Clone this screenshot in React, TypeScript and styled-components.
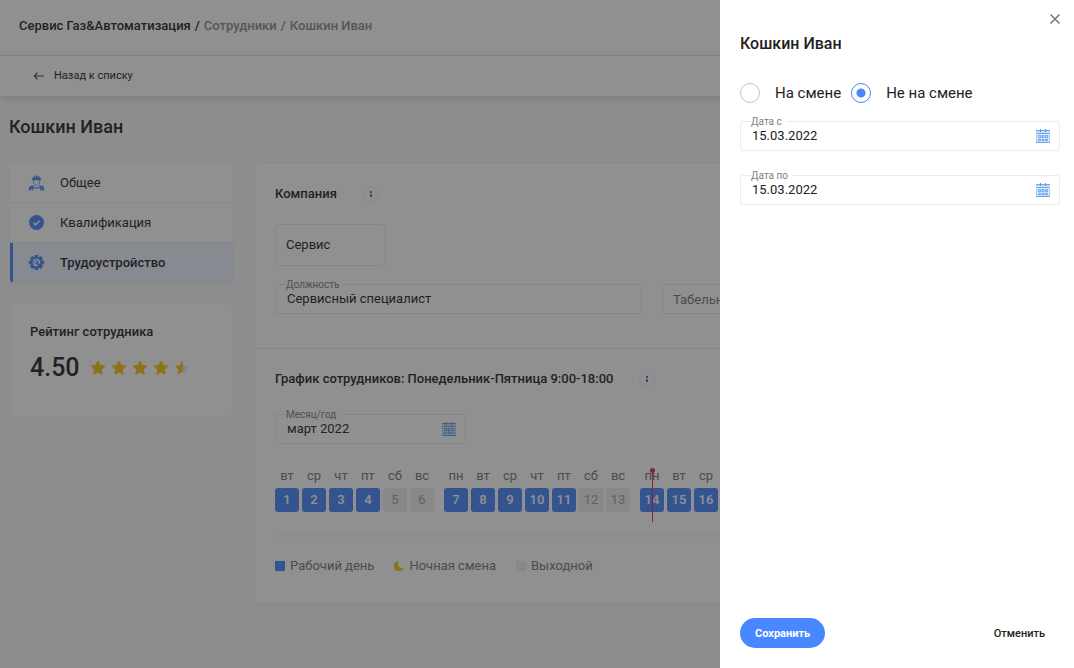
import React from 'react';
import styled, { createGlobalStyle, css } from 'styled-components';

const GlobalStyle = createGlobalStyle`
  *, *::before, *::after { box-sizing: border-box; }
  body {
    margin: 0;
    background: #f9f9f9;
    color: #222;
    font-family: Roboto, "Liberation Sans", sans-serif;
    font-size: 13px;
    line-height: 20px;
  }
  button, input { font: inherit; color: inherit; }
  h1, h2, h3 { margin: 0; font-weight: 500; }
  a { color: inherit; text-decoration: none; }
`;

const Page = styled.div`
  min-height: 100vh;
  overflow: hidden;
`;

const TopBar = styled.header`
  display: flex;
  align-items: center;
  height: 56px;
  padding: 0 19px 4px;
  background: #fff;
  border-bottom: 1px solid #e6e6e6;
`;

const Crumbs = styled.nav`
  display: flex;
  gap: 4px;
  font-weight: 500;
`;

const Crumb = styled.a<{ $muted?: boolean }>`
  color: ${(p) => (p.$muted ? '#8a8a8a' : '#222')};
`;

const SubBar = styled.div`
  display: flex;
  align-items: center;
  height: 40px;
  padding: 0 33px;
  background: #fff;
  box-shadow: 0 2px 8px rgba(0, 0, 0, 0.16);
`;

const BackLink = styled.a`
  display: flex;
  align-items: center;
  gap: 9px;
  font-size: 11px;
`;

const Title = styled.h1`
  padding: 19px 9px 24px;
  font-size: 18px;
  line-height: 24px;
`;

const Content = styled.div`
  display: flex;
  align-items: flex-start;
  gap: 20px;
  padding: 0 24px 24px 10px;
`;

const Side = styled.div`
  display: flex;
  flex-direction: column;
  flex: none;
  gap: 20px;
  width: 224px;
`;

const Menu = styled.nav`
  overflow: hidden;
  border-right: 1px solid #f0f0f0;
  border-radius: 4px;
  background: #fff;
`;

const MenuItem = styled.a<{ $active?: boolean }>`
  display: flex;
  align-items: center;
  gap: 15px;
  height: 40px;
  padding-left: ${(p) => (p.$active ? '15px' : '18px')};
  border-bottom: 1px solid #efefef;
  ${(p) =>
    p.$active &&
    css`
      background: #edf3ff;
      border-left: 3px solid #4787ff;
      font-weight: 500;
    `}
`;

const RatingCard = styled.section`
  height: 114px;
  padding: 18px 19px;
  border: 1px solid #f0f0f0;
  border-radius: 4px;
  background: #fff;
`;

const CardHeading = styled.h3`
  font-size: 13px;
`;

const RatingRow = styled.div`
  display: flex;
  align-items: center;
  gap: 10px;
  padding-top: 10px;
`;

const Score = styled.span`
  font-size: 25px;
  line-height: 32px;
  font-weight: 500;
`;

const Stars = styled.div`
  display: flex;
  gap: 5px;
`;

const Card = styled.main`
  flex: 1;
  min-width: 0;
  border: 1px solid #efefef;
  border-radius: 4px;
  background: #fff;
`;

const Section = styled.section`
  padding: 20px 20px 34px;
  & + & { border-top: 1px solid #ebebeb; }
`;

const SectionHead = styled.div<{ $gap: number }>`
  display: flex;
  align-items: center;
  gap: 26px;
  margin-bottom: ${(p) => p.$gap}px;
`;

const InfoButton = styled.button`
  display: flex;
  align-items: center;
  justify-content: center;
  width: 16px;
  height: 16px;
  padding: 0;
  border: 1px solid #efefef;
  border-radius: 50%;
  background: #fff;
`;

const CompanyChip = styled.div`
  width: 111px;
  padding: 10px;
  margin-bottom: 18px;
  border: 1px solid #ebebeb;
  border-radius: 4px;
`;

const FieldGrid = styled.div`
  display: grid;
  grid-template-columns: 1fr 1fr;
  gap: 20px;
`;

const FieldBox = styled.div<{ $width?: string }>`
  position: relative;
  display: flex;
  align-items: center;
  width: ${(p) => p.$width ?? '100%'};
  height: 30px;
  padding-right: 9px;
  border: 1px solid #ebebeb;
  border-radius: 3px;
  background: #fff;
`;

const FieldLabel = styled.label`
  position: absolute;
  top: -6px;
  left: 10px;
  padding-right: 4px;
  background: #fff;
  color: #808080;
  font-size: 10px;
  line-height: 12px;
`;

const TextInput = styled.input`
  flex: 1;
  min-width: 0;
  height: 28px;
  padding: 0 0 2px 11px;
  border: 0;
  background: none;
  outline: none;
  &:placeholder-shown { padding: 0 0 0 10px; }
  &::placeholder { color: #757575; opacity: 1; }
`;

const IconButton = styled.button`
  display: flex;
  padding: 0;
  border: 0;
  background: none;
`;

const Calendar = styled.div`
  display: flex;
  gap: 10px;
  margin-top: 22px;
  padding-bottom: 20px;
  border-bottom: 6px solid #fafafa;
`;

const Week = styled.div`
  display: flex;
  gap: 3px;
`;

const Day = styled.div`
  position: relative;
  display: flex;
  flex-direction: column;
  gap: 2px;
  width: 24px;
  text-align: center;
  color: #757575;
`;

const DayBox = styled.span<{ $off: boolean }>`
  height: 24px;
  border-radius: 3px;
  line-height: 24px;
  font-weight: ${(p) => (p.$off ? 400 : 500)};
  background: ${(p) => (p.$off ? '#efefef' : '#4787ff')};
  color: ${(p) => (p.$off ? '#a0a0a0' : '#fff')};
`;

const NowMarker = styled.span`
  position: absolute;
  top: 4px;
  left: 12px;
  width: 1px;
  height: 52px;
  background: #e4204a;
  &::before {
    content: '';
    position: absolute;
    top: -2px;
    left: -2px;
    width: 5px;
    height: 5px;
    border-radius: 50%;
    background: #e4204a;
  }
`;

const Legend = styled.div`
  display: flex;
  gap: 20px;
  padding-top: 18px;
  margin-bottom: -7px;
  color: #757575;
`;

const LegendItem = styled.span`
  display: flex;
  align-items: center;
  gap: 5px;
`;

const Swatch = styled.i<{ $color: string }>`
  width: 10px;
  height: 10px;
  background: ${(p) => p.$color};
`;

const Overlay = styled.div`
  position: fixed;
  inset: 0;
  display: flex;
  justify-content: flex-end;
  background: rgba(34, 34, 34, 0.5);
`;

const Drawer = styled.aside`
  display: flex;
  flex-direction: column;
  width: 354px;
  padding: 14px 14px 20px 20px;
  background: #fff;
`;

const CloseButton = styled(IconButton)`
  align-self: flex-end;
`;

const DrawerTitle = styled.h2`
  margin-top: 10px;
  font-size: 16px;
`;

const RadioRow = styled.div`
  display: flex;
  gap: 10px;
  margin: 29px 0 18px;
  font-size: 15px;
`;

const RadioLabel = styled.label`
  display: flex;
  align-items: center;
  gap: 15px;
`;

const Radio = styled.input`
  appearance: none;
  width: 20px;
  height: 20px;
  margin: 0;
  border: 1px solid #c4c4c4;
  border-radius: 50%;
  &:checked {
    border-color: #4787ff;
    background: radial-gradient(circle, #4787ff 0 4px, #fff 5px);
  }
`;

const DrawerFields = styled.div`
  display: flex;
  flex-direction: column;
  gap: 24px;
`;

const DrawerFooter = styled.div`
  display: flex;
  justify-content: space-between;
  margin-top: auto;
`;

const FooterButton = styled.button<{ $primary?: boolean }>`
  height: 30px;
  padding: 2px 15px 0;
  border: 0;
  border-radius: 15px;
  font-size: 11px;
  font-weight: ${(p) => (p.$primary ? 700 : 500)};
  background: ${(p) => (p.$primary ? '#4787ff' : 'none')};
  color: ${(p) => (p.$primary ? '#fff' : '#222')};
`;

const ArrowIcon = () => (
  <svg width="12" height="10" viewBox="0 0 12 10" fill="none" stroke="#444" strokeWidth="1.2" aria-hidden="true">
    <path d="M11 5H1.600M4.500 1.700 1.400 5l3.100 3.300" />
  </svg>
);

const WorkerIcon = () => (
  <svg width="17" height="16" viewBox="0 0 17 16" fill="#4787ff" aria-hidden="true">
    <path d="M4.600 3.600C4.800 2.200 5.800 1.300 7.200 1V2.600H7.900V.3H9.100V2.600H9.800V1c1.400.3 2.400 1.200 2.600 2.600h.8v1.600H3.800V3.600z" />
    <path d="M5.400 5.200v1.600c0 1.900 1.400 3.500 3.100 3.500s3.100-1.600 3.100-3.500V5.200" fill="none" stroke="#4787ff" strokeWidth=".8" />
    <path d="M5.800 10.200v1.600H5v3.700H3.700v-2H3v2H.8V13.600c0-1.600 1.100-2.600 2.600-2.900zM11.200 10.200v1.600h.8v3.700h1.300v-2h.7v2h2.200V13.600c0-1.600-1.100-2.600-2.600-2.900z" />
    <path d="M5 12.200h7v1.400H5z" />
  </svg>
);

const CheckIcon = () => (
  <svg width="17" height="16" viewBox="0 0 17 16" fill="none" aria-hidden="true">
    <circle cx="8.500" cy="7.500" r="7.500" fill="#4787ff" />
    <path d="m5.300 7.700 2.200 2.100 4.100-4.100" stroke="#fff" strokeWidth="1.500" />
  </svg>
);

const TEETH = [0, 45, 90, 135, 180, 225, 270, 315];

const GearIcon = () => (
  <svg width="17" height="16" viewBox="0 0 17 16" fill="none" aria-hidden="true">
    {TEETH.map((angle) => (
      <rect key={angle} x="6.700" y="0" width="3.600" height="3.500" rx=".6" fill="#4787ff" transform={`rotate(${angle} 8.500 7.500)`} />
    ))}
    <circle cx="8.500" cy="7.500" r="5" stroke="#4787ff" strokeWidth="2.200" />
    <path d="m8.600 7.600 3.600 3.600" stroke="#4787ff" strokeWidth="2" />
    <path d="M6.200 6.200c-.5 1.800.8 2.900 2.300 2.400 1.400-.4 1.900-1.600 1.300-2.900L8.600 6.900 7.600 6l1-1.300" stroke="#4787ff" strokeWidth="1" />
  </svg>
);

const STAR = 'M8 1l2.100 4.400 4.800.7-3.500 3.400.8 4.800L8 12l-4.200 2.300.8-4.800L1.100 6.100l4.800-.7z';

const StarIcon = ({ half = false }: { half?: boolean }) => (
  <svg width="16" height="16" viewBox="0 0 16 16" aria-hidden="true">
    {half && <path d={STAR} fill="#e6e6e6" />}
    <path
      d={half ? 'M8.800.8V12.400L8 12l-4.500 2.600.9-5L.8 6.100l5-.7L8 .8z' : STAR}
      fill="#f5c60c"
      stroke={half ? 'none' : '#f5c60c'}
      strokeWidth="1"
      strokeLinejoin="round"
    />
  </svg>
);

const InfoIcon = () => (
  <svg width="2" height="6" viewBox="0 0 2 6" fill="#2f7fd6" aria-hidden="true">
    <path d="M0 0h2v2H0zM0 3h2v3H0z" />
  </svg>
);

const CalendarIcon = () => (
  <svg width="14" height="15" viewBox="0 0 14 15" fill="none" aria-hidden="true">
    <path d="M.5 1.500h13v12H.5z" fill="#d9ecff" stroke="#a3cbf5" />
    <path d="M0 1h14v4H0z" fill="#c3dffb" />
    <path d="M0 1.500h14M1 4.500h12M0 13.500h14" stroke="#6ba6e6" />
    <path d="M4.500 0v3M9.500 0v3" stroke="#5596df" />
    <path d="M2.500 6.500h2v2h-2zM6 6.500h2v2H6zM9.500 6.500h2v2h-2zM2.500 10.200h2v1.600h-2zM6 10.200h2v1.600H6zM9.500 10.200h2v1.600h-2z" stroke="#5596df" strokeWidth=".8" />
  </svg>
);

const MoonIcon = () => (
  <svg width="10" height="12" viewBox="0 0 10 12" fill="#f5c60c" aria-hidden="true">
    <path d="M5 .8C1.500 1.400 0 3.800 0 6.200 0 9 2.200 11 5 11c2.200 0 4.200-1.100 5-3C6 9.600 2.200 5.500 5 .8z" />
  </svg>
);

const CloseIcon = () => (
  <svg width="10" height="10" viewBox="0 0 10 10" fill="none" stroke="#777" strokeWidth="1.500" aria-hidden="true">
    <path d="m.5.5 9 9M9.500.5l-9 9" />
  </svg>
);

type DateFieldProps = { id: string; label: string; value: string; width?: string };

const DateField = ({ id, label, value, width }: DateFieldProps) => (
  <FieldBox $width={width}>
    <FieldLabel htmlFor={id}>{label}</FieldLabel>
    <TextInput id={id} defaultValue={value} />
    <IconButton type="button" aria-label="Открыть календарь">
      <CalendarIcon />
    </IconButton>
  </FieldBox>
);

const DAY_NAMES = ['пн', 'вт', 'ср', 'чт', 'пт', 'сб', 'вс'];
const WEEKS = [
  [1, 2, 3, 4, 5, 6],
  [7, 8, 9, 10, 11, 12, 13],
  [14, 15, 16],
];
const TODAY = 14;

export default function App() {
  return (
    <>
      <GlobalStyle />
      <Page>
        <TopBar>
          <Crumbs aria-label="Навигация">
            <Crumb href="#">Сервис Газ&amp;Автоматизация</Crumb>
            <span>/</span>
            <Crumb href="#" $muted>Сотрудники</Crumb>
            <Crumb as="span" $muted>/</Crumb>
            <Crumb as="span" $muted>Кошкин Иван</Crumb>
          </Crumbs>
        </TopBar>
        <SubBar>
          <BackLink href="#">
            <ArrowIcon />
            Назад к списку
          </BackLink>
        </SubBar>
        <Title>Кошкин Иван</Title>
        <Content>
          <Side>
            <Menu>
              <MenuItem href="#"><WorkerIcon />Общее</MenuItem>
              <MenuItem href="#"><CheckIcon />Квалификация</MenuItem>
              <MenuItem href="#" $active><GearIcon />Трудоустройство</MenuItem>
            </Menu>
            <RatingCard>
              <CardHeading>Рейтинг сотрудника</CardHeading>
              <RatingRow>
                <Score>4.50</Score>
                <Stars>
                  <StarIcon />
                  <StarIcon />
                  <StarIcon />
                  <StarIcon />
                  <StarIcon half />
                </Stars>
              </RatingRow>
            </RatingCard>
          </Side>
          <Card>
            <Section>
              <SectionHead $gap={20}>
                <CardHeading>Компания</CardHeading>
                <InfoButton type="button" aria-label="Справка"><InfoIcon /></InfoButton>
              </SectionHead>
              <CompanyChip>Сервис</CompanyChip>
              <FieldGrid>
                <FieldBox>
                  <FieldLabel htmlFor="position">Должность</FieldLabel>
                  <TextInput id="position" defaultValue="Сервисный специалист" />
                </FieldBox>
                <FieldBox>
                  <TextInput aria-label="Табельный номер" placeholder="Табельный номер" />
                </FieldBox>
              </FieldGrid>
            </Section>
            <Section>
              <SectionHead $gap={25}>
                <CardHeading>График сотрудников: Понедельник-Пятница 9:00-18:00</CardHeading>
                <InfoButton type="button" aria-label="Справка"><InfoIcon /></InfoButton>
              </SectionHead>
              <DateField id="month" label="Месяц/год" value="март 2022" width="191px" />
              <Calendar>
                {WEEKS.map((week) => (
                  <Week key={week[0]}>
                    {week.map((day) => {
                      const weekday = day % 7;
                      return (
                        <Day key={day}>
                          <span>{DAY_NAMES[weekday]}</span>
                          <DayBox $off={weekday > 4}>{day}</DayBox>
                          {day === TODAY && <NowMarker />}
                        </Day>
                      );
                    })}
                  </Week>
                ))}
              </Calendar>
              <Legend>
                <LegendItem><Swatch $color="#4787ff" />Рабочий день</LegendItem>
                <LegendItem><MoonIcon />Ночная смена</LegendItem>
                <LegendItem><Swatch $color="#efefef" />Выходной</LegendItem>
              </Legend>
            </Section>
          </Card>
        </Content>
      </Page>
      <Overlay>
        <Drawer role="dialog" aria-labelledby="drawer-title">
          <CloseButton type="button" aria-label="Закрыть"><CloseIcon /></CloseButton>
          <DrawerTitle id="drawer-title">Кошкин Иван</DrawerTitle>
          <RadioRow>
            <RadioLabel><Radio type="radio" name="shift" />На смене</RadioLabel>
            <RadioLabel><Radio type="radio" name="shift" defaultChecked />Не на смене</RadioLabel>
          </RadioRow>
          <DrawerFields>
            <DateField id="date-from" label="Дата с" value="15.03.2022" />
            <DateField id="date-to" label="Дата по" value="15.03.2022" />
          </DrawerFields>
          <DrawerFooter>
            <FooterButton type="button" $primary>Сохранить</FooterButton>
            <FooterButton type="button">Отменить</FooterButton>
          </DrawerFooter>
        </Drawer>
      </Overlay>
    </>
  );
}
